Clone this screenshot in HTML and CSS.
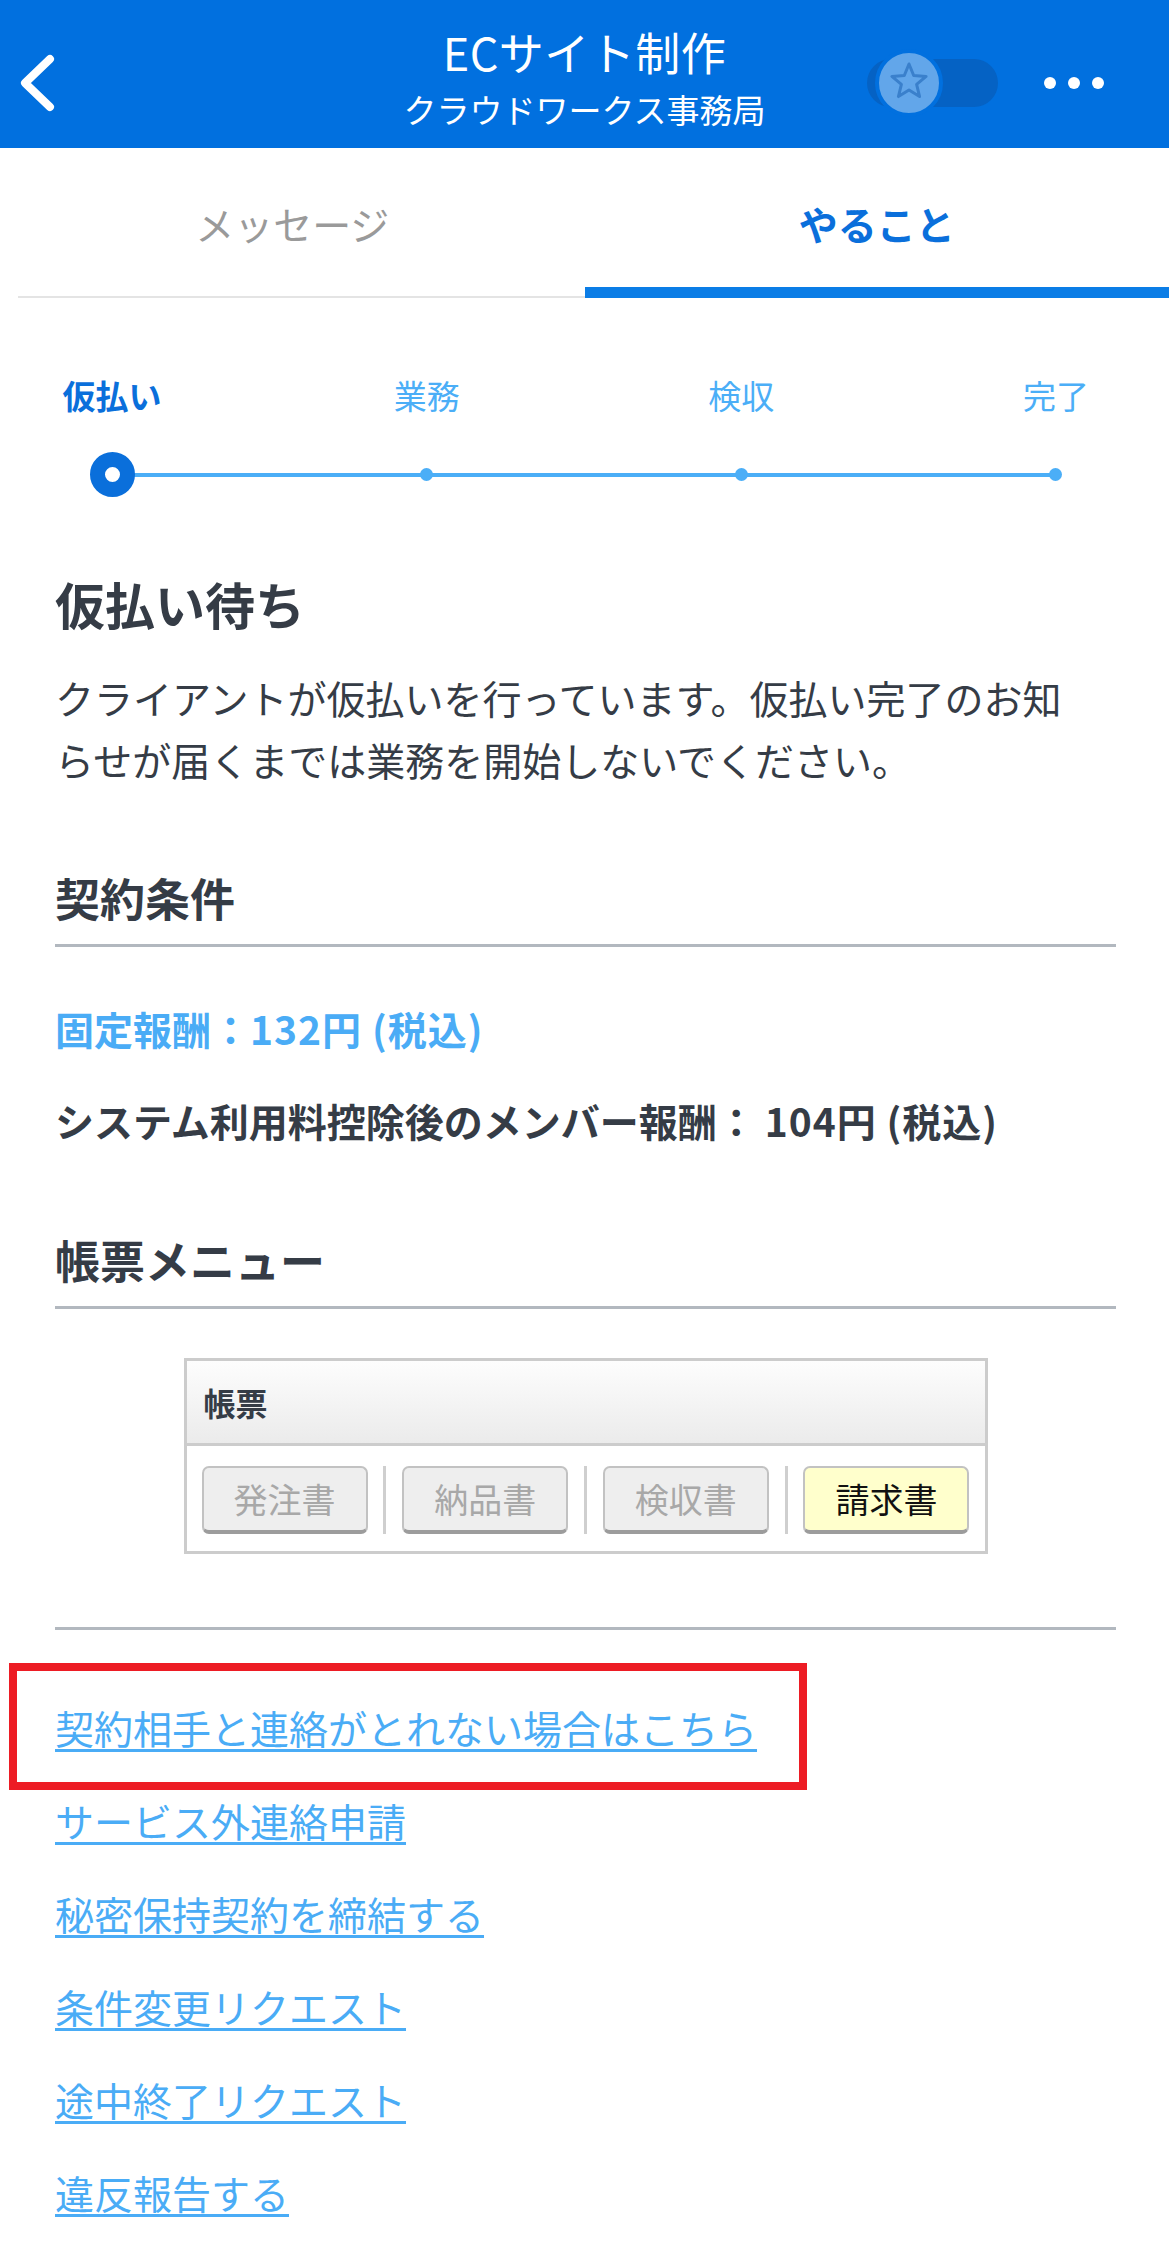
FILE: index.html
```html
<!DOCTYPE html>
<html lang="ja">
<head>
<meta charset="utf-8">
<title>ECサイト制作</title>
<link rel="stylesheet" href="styles.css">
</head>
<body>
<header class="nav">
  <div class="nav-left">
    <svg class="back" viewBox="0 0 60 60" width="60" height="60" aria-hidden="true">
      <path d="M50 6 L25 30 L50 54" fill="none" stroke="#fff" stroke-width="8" stroke-linecap="round" stroke-linejoin="round"/>
    </svg>
  </div>
  <div class="nav-title">
    <div class="title">ECサイト制作</div>
    <div class="subtitle">クラウドワークス事務局</div>
  </div>
  <div class="nav-right">
    <div class="toggle">
      <span class="knob">
        <svg viewBox="-22 -22 44 44" width="44" height="44" aria-hidden="true">
          <path d="M0 -18 L4.7 -6.47 L17.12 -5.56 L7.61 2.47 L10.58 14.56 L0 8 L-10.58 14.56 L-7.61 2.47 L-17.12 -5.56 L-4.7 -6.47 Z" fill="none" stroke="#3a80cc" stroke-width="3" stroke-linejoin="round"/>
        </svg>
      </span>
    </div>
    <div class="more"><i></i><i></i><i></i></div>
  </div>
</header>

<nav class="tabs">
  <div class="tab">メッセージ</div>
  <div class="tab active">やること</div>
</nav>

<main class="content">
  <div class="steps">
    <div class="step-labels">
      <span class="current">仮払い</span>
      <span>業務</span>
      <span>検収</span>
      <span>完了</span>
    </div>
    <div class="step-dots">
      <span><i class="ring"></i></span>
      <span><i></i></span>
      <span><i></i></span>
      <span><i></i></span>
    </div>
  </div>

  <h2 class="page-title">仮払い待ち</h2>
  <p class="lead">クライアントが仮払いを行っています。仮払い完了のお知<br>らせが届くまでは業務を開始しないでください。</p>

  <h3 class="section-title">契約条件</h3>
  <div class="rule"></div>
  <p class="fee">固定報酬：<span class="num">132円 (税込)</span></p>
  <p class="net">システム利用料控除後のメンバー報酬： <span class="num">104円 (税込)</span></p>

  <h3 class="section-title second">帳票メニュー</h3>
  <div class="rule"></div>

  <div class="ledger">
    <div class="ledger-head">帳票</div>
    <div class="ledger-body">
      <span class="btn">発注書</span>
      <span class="sep"></span>
      <span class="btn">納品書</span>
      <span class="sep"></span>
      <span class="btn">検収書</span>
      <span class="sep"></span>
      <span class="btn on">請求書</span>
    </div>
  </div>

  <div class="rule bottom"></div>

  <div class="notice">
    <a class="link" href="#">契約相手と連絡がとれない場合はこちら</a>
  </div>
  <div class="links">
    <a class="link" href="#">サービス外連絡申請</a>
    <a class="link" href="#">秘密保持契約を締結する</a>
    <a class="link" href="#">条件変更リクエスト</a>
    <a class="link" href="#">途中終了リクエスト</a>
    <a class="link" href="#">違反報告する</a>
  </div>
</main>
</body>
</html>
```

FILE: styles.css
```css
* {
  box-sizing: border-box;
  margin: 0;
  padding: 0;
}

body {
  margin: 0;
  width: 1169px;
  background: #fff;
  color: #353c46;
  font-family: "Noto Sans CJK JP", "Noto Sans", sans-serif;
}

/* ---------- header ---------- */
.nav {
  height: 148px;
  background: #0170df;
  color: #fff;
  display: grid;
  grid-template-columns: 1fr auto 1fr;
  padding-top: 25px;
}

.nav-left {
  height: 116px;
  display: flex;
  align-items: center;
}

.back {
  display: block;
}

.nav-title {
  text-align: center;
}

.title {
  font-size: 45px;
  line-height: 54px;
  letter-spacing: 0.5px;
}

.subtitle {
  font-size: 33px;
  line-height: 40px;
  margin-top: 10px;
}

.nav-right {
  height: 116px;
  display: flex;
  align-items: center;
  justify-content: flex-end;
  padding-right: 65px;
}

.toggle {
  position: relative;
  width: 131px;
  height: 48px;
  border-radius: 24px;
  background: #0562c4;
  margin-right: 46px;
}

.knob {
  position: absolute;
  left: 8px;
  top: -10px;
  width: 68px;
  height: 68px;
  border-radius: 50%;
  border: 4px solid #0170df;
  background: #62a6ea;
  display: flex;
  align-items: center;
  justify-content: center;
}

.knob svg {
  display: block;
  margin-top: -2px;
}

.more {
  display: flex;
  gap: 12px;
}

.more i {
  width: 12px;
  height: 12px;
  border-radius: 50%;
  background: #fff;
}

/* ---------- tabs ---------- */
.tabs {
  display: flex;
  height: 150px;
}

.tab {
  position: relative;
  flex: 1;
  display: flex;
  align-items: center;
  justify-content: center;
  font-size: 39px;
  line-height: 1;
  color: #9a9a9a;
}

.tab::after {
  content: "";
  position: absolute;
  left: 18px;
  right: 0;
  bottom: 0;
  height: 2px;
  background: #e4e4e4;
}

.tab.active {
  color: #0a6fdb;
  font-weight: 700;
}

.tab.active::after {
  left: 0;
  height: 11px;
  background: #0b7de6;
}

/* ---------- content ---------- */
.content {
  padding: 0 53px 0 55px;
}

.steps {
  margin: 77px 60px 0 57px;
}

.step-labels {
  display: flex;
  justify-content: space-between;
  height: 40px;
}

.step-labels span {
  width: 0;
  display: flex;
  justify-content: center;
  white-space: nowrap;
  font-size: 33px;
  line-height: 40px;
  color: #4baef7;
}

.step-labels span.current {
  color: #0a6fdb;
  font-weight: 700;
}

.step-dots {
  display: flex;
  justify-content: space-between;
  align-items: center;
  height: 45px;
  margin-top: 37px;
  background: linear-gradient(#4baef7, #4baef7) center / 100% 4px no-repeat;
}

.step-dots span {
  width: 0;
  display: flex;
  justify-content: center;
}

.step-dots i {
  flex: none;
  width: 13px;
  height: 13px;
  border-radius: 50%;
  background: #4baef7;
}

.step-dots i.ring {
  width: 45px;
  height: 45px;
  border: 15px solid #0a6fdb;
  background: #fff;
}

.page-title {
  font-size: 50px;
  line-height: 60px;
  font-weight: 700;
  margin-top: 76px;
}

.lead {
  font-size: 39px;
  line-height: 62px;
  margin-top: 33px;
}

.section-title {
  font-size: 45px;
  line-height: 56px;
  font-weight: 700;
  margin-top: 80px;
}

.section-title.second {
  margin-top: 84px;
}

.rule {
  height: 3px;
  background: #b2b8bf;
  margin-top: 18px;
}

.rule.bottom {
  margin-top: 73px;
}

.fee {
  font-size: 39px;
  line-height: 56px;
  font-weight: 700;
  color: #4aacf6;
  margin-top: 53px;
}

.net {
  font-size: 39px;
  line-height: 56px;
  font-weight: 700;
  margin-top: 36px;
}

.num {
  letter-spacing: 1px;
}

/* ---------- ledger table ---------- */
.ledger {
  width: 804px;
  margin: 49px auto 0;
  border: 3px solid #cccccc;
}

.ledger-head {
  height: 85px;
  border-bottom: 3px solid #cccccc;
  background: linear-gradient(#fdfdfd, #ebebeb);
  display: flex;
  align-items: center;
  padding-left: 17px;
  font-size: 32px;
  font-weight: 700;
}

.ledger-body {
  display: flex;
  justify-content: space-between;
  padding: 20px 15px 17px;
  background: #fff;
}

.btn {
  width: 166px;
  height: 68px;
  border: 2px solid #c2c2c2;
  border-bottom: 4px solid #9c9c9c;
  border-radius: 7px;
  background: #eeeeee;
  color: #a8a8a8;
  font-size: 34px;
  line-height: 1;
  display: flex;
  align-items: center;
  justify-content: center;
}

.btn.on {
  background: #ffffcc;
  color: #111;
}

.sep {
  width: 3px;
  background: #cfcfcf;
}

/* ---------- links ---------- */
.link {
  display: block;
  width: fit-content;
  font-size: 39px;
  line-height: 56px;
  color: #4aacf6;
  text-decoration: underline;
  text-decoration-thickness: 3px;
  text-underline-offset: 5px;
}

.notice {
  width: 798px;
  margin: 33px 0 0 -46px;
  border: 8px solid #ed1c24;
  padding: 28px 0 27px 38px;
}

.links {
  margin-top: 2px;
}

.links .link + .link {
  margin-top: 37px;
}
```
